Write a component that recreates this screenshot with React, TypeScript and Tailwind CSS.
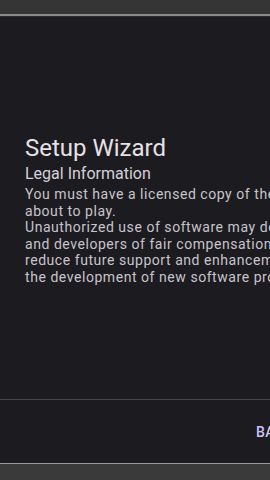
const paragraphs = [
  "You must have a licensed copy of the software you are about to play.",
  "Unauthorized use of software may deprive its publishers and developers of fair compensation, which in turn can reduce future support and enhancements, and also hinder the development of new software products.",
];

const App = () => {
  return (
    <div className="flex h-[480px] w-[270px] flex-col overflow-hidden bg-[#1c1b20] font-['Roboto',sans-serif]">
      <div className="h-[14px] shrink-0 bg-[#353535]" />
      <div className="h-[2px] shrink-0 bg-[#8a8a8a]" />
      <div className="h-[1px] shrink-0 bg-[#2a2a2a]" />

      <div className="h-[382px] shrink-0 pl-[25px] pt-[117px]">
        <div className="w-[391px]">
          <h1 className="text-[24px] leading-[28px] text-[#e6e1e6]">
            Setup Wizard
          </h1>
          <h2 className="mt-[2px] text-[16px] leading-[20px] text-[#d6d1d8]">
            Legal Information
          </h2>
          <div className="mt-[2px] text-[14px] leading-[16.5px] tracking-[0.55px] text-[#c8c4cb]">
            {paragraphs.map((text, index) => (
              <p key={index}>{text}</p>
            ))}
          </div>
        </div>
      </div>

      <div className="h-[1px] shrink-0 bg-[#47464b]" />
      <div className="flex h-[63px] shrink-0 items-center justify-end">
        <button className="mr-[-34px] w-[48px] text-left text-[14px] leading-[20px] font-medium tracking-[0.5px] text-[#d0c4f5]">
          BACK
        </button>
      </div>
      <div className="h-[1px] shrink-0 bg-[#9a9a9a]" />
      <div className="h-[16px] shrink-0 bg-[#3a3a3a]" />
    </div>
  );
};

export default App;
